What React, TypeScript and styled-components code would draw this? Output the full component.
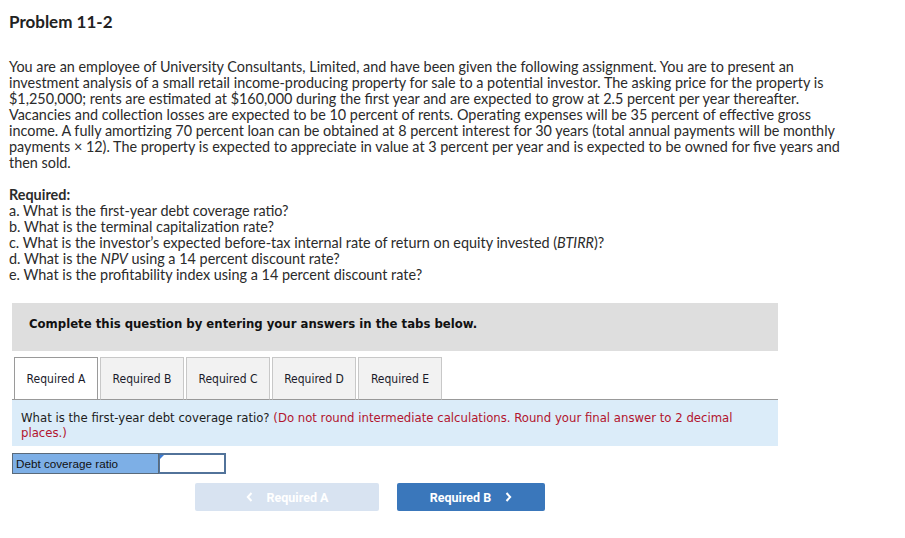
import React from "react";
import styled, { createGlobalStyle } from "styled-components";

const GlobalStyle = createGlobalStyle`
  body {
    margin: 0;
    background: #ffffff;
  }
`;

const Page = styled.div`
  padding: 12px 0 0 9px;
  width: 850px;
  font-family: Lato, "Open Sans", sans-serif;
  color: #2b2b2b;
`;

const Title = styled.h1`
  margin: 0;
  font-size: 17px;
  line-height: 20px;
  font-weight: 700;
  color: #222;
`;

const Intro = styled.p`
  margin: 27px 0 16px;
  font-size: 14.4px;
  line-height: 16px;
`;

const RequiredHead = styled.div`
  font-size: 14.4px;
  line-height: 16px;
  font-weight: 700;
`;

const RequiredList = styled.ol`
  margin: 0;
  padding: 0;
  list-style: none;
  font-size: 14.4px;
  line-height: 16px;
`;

const Question = styled.section`
  margin: 20px 0 0 3px;
  width: 766px;
  font-family: "DejaVu Sans Condensed", "DejaVu Sans", Verdana, sans-serif;
`;

const Banner = styled.div`
  box-sizing: border-box;
  height: 48px;
  padding: 11px 17px 0;
  background: #dedede;
  font-size: 13px;
  line-height: 20px;
  font-weight: 700;
  color: #111;
`;

const TabRow = styled.div`
  display: flex;
  gap: 2px;
  margin-top: 6px;
  padding-left: 2px;
  border-bottom: 1px solid #999;
`;

const Tab = styled.button<{ $active?: boolean }>`
  box-sizing: border-box;
  width: 84px;
  height: 43px;
  padding: 0;
  margin-bottom: -1px;
  border: 1px solid ${({ $active }) => ($active ? "#9a9a9a" : "#c8c8c8")};
  border-bottom-color: #999;
  background: ${({ $active }) => ($active ? "#ffffff" : "#f2f2f2")};
  font-family: inherit;
  font-size: 12px;
  color: #1a1a2a;
  cursor: pointer;
`;

const Panel = styled.div`
  box-sizing: border-box;
  height: 46px;
  padding: 10px 9px 0;
  background: #dbecf9;
  font-size: 13px;
  line-height: 15px;
  color: #1c1c1c;
`;

const Note = styled.span`
  color: #b2152f;
`;

const AnswerRow = styled.div`
  display: flex;
  margin-top: 7px;
  height: 21px;
`;

const AnswerLabel = styled.label`
  box-sizing: border-box;
  width: 147px;
  padding: 3px 0 0 3px;
  background: #7dafe6;
  border: 1px solid #5a6a7a;
  font-family: "Liberation Sans", Arial, sans-serif;
  font-size: 11.7px;
  color: #111;
`;

const AnswerField = styled.div`
  position: relative;
  box-sizing: border-box;
  width: 67px;
  border: 2px solid #52739a;
  border-left-width: 1px;
  background: #fff;

  &::before {
    content: "";
    position: absolute;
    top: 0;
    left: 0;
    border-top: 4px solid #3a7bd5;
    border-right: 4px solid transparent;
  }
`;

const AnswerInput = styled.input`
  box-sizing: border-box;
  width: 100%;
  height: 100%;
  border: 0;
  outline: none;
  background: transparent;
`;

const NavRow = styled.div`
  display: flex;
  gap: 18px;
  margin-top: 9px;
  padding-left: 183px;
`;

const NavButton = styled.button<{ $primary?: boolean; $width: number }>`
  display: flex;
  align-items: center;
  justify-content: center;
  gap: 14px;
  width: ${({ $width }) => $width}px;
  height: 28px;
  border: 0;
  border-radius: 2px;
  background: ${({ $primary }) => ($primary ? "#3a77bb" : "#d8e3f1")};
  color: #fff;
  font-family: Roboto, "Liberation Sans", sans-serif;
  font-size: 12.5px;
  font-weight: 700;
  cursor: ${({ $primary }) => ($primary ? "pointer" : "default")};
`;

const Chevron = ({ dir }: { dir: "left" | "right" }) => (
  <svg width="7" height="10" viewBox="0 0 7 10" aria-hidden>
    <path
      d={dir === "left" ? "M5.5 1 L1.8 5 L5.5 9" : "M1.5 1 L5.2 5 L1.5 9"}
      fill="none"
      stroke="#fff"
      strokeWidth="2"
    />
  </svg>
);

const tabs = ["Required A", "Required B", "Required C", "Required D", "Required E"];

export default function App() {
  return (
    <>
      <GlobalStyle />
      <Page>
        <Title>Problem 11-2</Title>
        <Intro>
          You are an employee of University Consultants, Limited, and have been given the following
          assignment. You are to present an investment analysis of a small retail income-producing
          property for sale to a potential investor. The asking price for the property is $1,250,000;
          rents are estimated at $160,000 during the first year and are expected to grow at 2.5 percent
          per year thereafter. Vacancies and collection losses are expected to be 10 percent of rents.
          Operating expenses will be 35 percent of effective gross income. A fully amortizing 70 percent
          loan can be obtained at 8 percent interest for 30 years (total annual payments will be monthly
          payments × 12). The property is expected to appreciate in value at 3 percent per year and is
          expected to be owned for five years and then sold.
        </Intro>
        <RequiredHead>Required:</RequiredHead>
        <RequiredList>
          <li>a. What is the first-year debt coverage ratio?</li>
          <li>b. What is the terminal capitalization rate?</li>
          <li>
            c. What is the investor’s expected before-tax internal rate of return on equity invested (
            <i>BTIRR</i>)?
          </li>
          <li>
            d. What is the <i>NPV</i> using a 14 percent discount rate?
          </li>
          <li>e. What is the profitability index using a 14 percent discount rate?</li>
        </RequiredList>

        <Question>
          <Banner>Complete this question by entering your answers in the tabs below.</Banner>
          <TabRow>
            {tabs.map((t, i) => (
              <Tab key={t} $active={i === 0}>
                {t}
              </Tab>
            ))}
          </TabRow>
          <Panel>
            What is the first-year debt coverage ratio?{" "}
            <Note>(Do not round intermediate calculations. Round your final answer to 2 decimal places.)</Note>
          </Panel>
          <AnswerRow>
            <AnswerLabel>Debt coverage ratio</AnswerLabel>
            <AnswerField>
              <AnswerInput aria-label="Debt coverage ratio" />
            </AnswerField>
          </AnswerRow>
          <NavRow>
            <NavButton $width={184} disabled>
              <Chevron dir="left" />
              Required A
            </NavButton>
            <NavButton $width={148} $primary>
              Required B
              <Chevron dir="right" />
            </NavButton>
          </NavRow>
        </Question>
      </Page>
    </>
  );
}
